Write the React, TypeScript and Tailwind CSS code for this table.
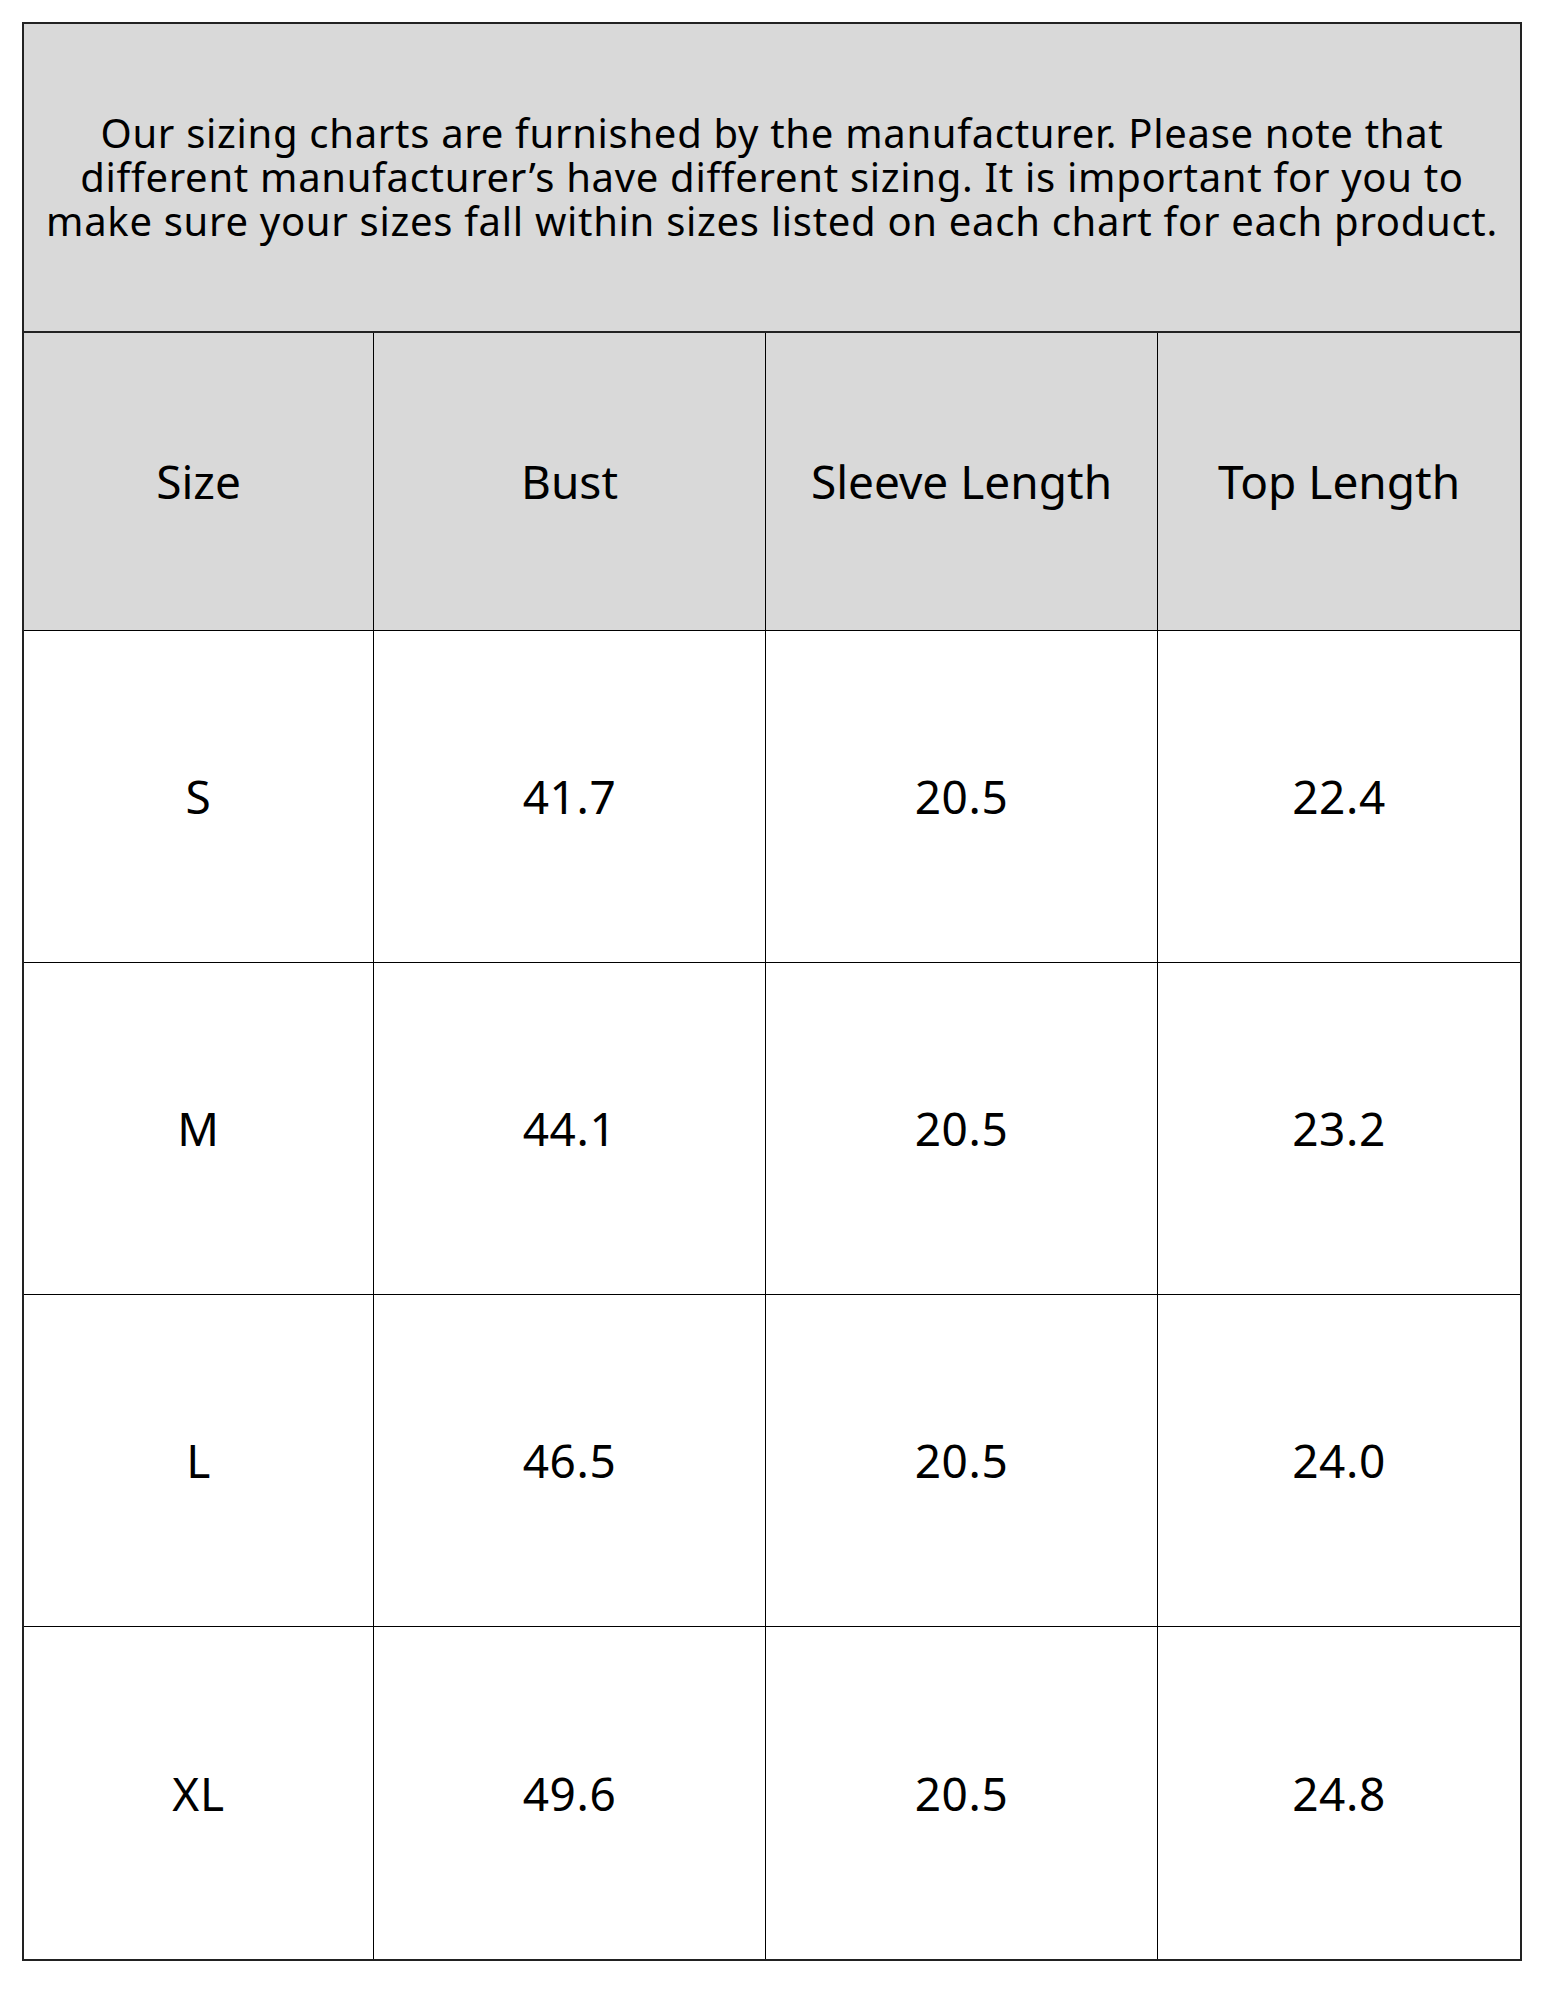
const rows = [
  ["S", "41.7", "20.5", "22.4"],
  ["M", "44.1", "20.5", "23.2"],
  ["L", "46.5", "20.5", "24.0"],
  ["XL", "49.6", "20.5", "24.8"],
];

const cols = "grid grid-cols-[350px_392px_392px_1fr]";

const App = () => {
  return (
    <div className="min-h-[2000px] bg-white pt-[22px] pl-[22px] font-['Noto_Sans',sans-serif] text-black">
      <div className="w-[1500px] border-2 border-[#222]">
        <div className="h-[309px] bg-[#d9d9d9] border-b-2 border-[#222] flex items-center justify-center text-center">
          <p className="text-[40px] leading-[44px] tracking-[0.7px] mb-[2px] whitespace-nowrap">
            Our sizing charts are furnished by the manufacturer. Please note that
            <br />
            different manufacturer’s have different sizing. It is important for you to
            <br />
            make sure your sizes fall within sizes listed on each chart for each product.
          </p>
        </div>
        <div className={`${cols} h-[298px] bg-[#d9d9d9] border-b border-black text-[46px]`}>
          {["Size", "Bust", "Sleeve Length", "Top Length"].map((h, i) => (
            <div
              key={h}
              className={`flex items-center justify-center ${i < 3 ? "border-r border-black" : ""}`}
            >
              {h}
            </div>
          ))}
        </div>
        {rows.map((r, ri) => (
          <div
            key={r[0]}
            className={`${cols} h-[332px] text-[46px] tracking-[0.6px] ${ri < rows.length - 1 ? "border-b border-black" : ""}`}
          >
            {r.map((c, i) => (
              <div
                key={i}
                className={`flex items-center justify-center ${i < 3 ? "border-r border-black" : ""}`}
              >
                {c}
              </div>
            ))}
          </div>
        ))}
      </div>
    </div>
  );
};

export default App;
